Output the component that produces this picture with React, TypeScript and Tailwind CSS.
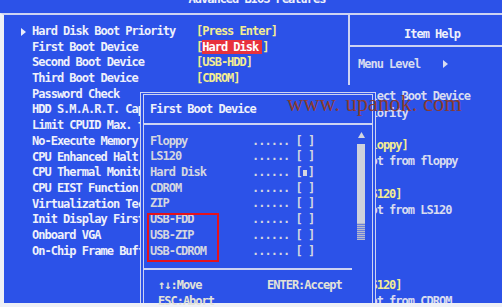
const MENU = [
  { label: "Hard Disk Boot Priority", value: "[Press Enter]", arrow: true },
  { label: "First Boot Device", value: "hd" },
  { label: "Second Boot Device", value: "[USB-HDD]" },
  { label: "Third Boot Device", value: "[CDROM]" },
  { label: "Password Check", value: "" },
  { label: "HDD S.M.A.R.T. Capability", value: "" },
  { label: "Limit CPUID Max. to 3", value: "" },
  { label: "No-Execute Memory Protect", value: "" },
  { label: "CPU Enhanced Halt (C1E)", value: "" },
  { label: "CPU Thermal Monitor 2(TM2)", value: "" },
  { label: "CPU EIST Function", value: "" },
  { label: "Virtualization Technology", value: "" },
  { label: "Init Display First", value: "" },
  { label: "Onboard VGA", value: "" },
  { label: "On-Chip Frame Buffer Size", value: "" },
];

const DEVICES = ["Floppy", "LS120", "Hard Disk", "CDROM", "ZIP", "USB-FDD", "USB-ZIP", "USB-CDROM"];

// help lines that sit behind the popup: only the part right of it shows
const HELP = [
  { text: "Select Boot Device", yellow: false },
  { text: "Priority", yellow: false },
  { text: "", yellow: false },
  { text: "[Floppy]", yellow: true },
  { text: "Boot from floppy", yellow: false },
  { text: "", yellow: false },
  { text: "[LS120]", yellow: true },
  { text: "Boot from LS120", yellow: false },
];

function Arrow({ color = "#e8ecfa" }: { color?: string }) {
  return (
    <svg width="5" height="8" viewBox="0 0 5 8">
      <polygon points="0,0 5,4 0,8" fill={color} />
    </svg>
  );
}

function HelpLine({ text, yellow, className = "" }: { text: string; yellow?: boolean; className?: string }) {
  return (
    <div className={`ml-[18px] h-[16.2px] overflow-hidden whitespace-nowrap leading-[16.2px] ${className}`}>
      <div className={`-ml-[18px] ${yellow ? "text-[#f3ec92]" : ""}`}>{text}</div>
    </div>
  );
}

export default function App() {
  return (
    <div className="relative flex h-[307px] w-[502px] flex-col overflow-hidden bg-[#2c52e8] font-['DejaVu_Sans_Mono','Liberation_Mono',monospace] text-[12px] font-bold tracking-[-1px]">
      {/* title, mostly cut off by the photo */}
      <div className="h-[13px] shrink-0 overflow-hidden">
        <div className="-mt-[8px] h-[15.7px] pl-[12px] text-center leading-[15.7px] text-[#eef0fb]">
          Advanced BIOS Features
        </div>
      </div>

      <div className="flex min-h-0 flex-1 border-l-4 border-t-2 border-l-[#eef0f6] border-t-[#cdd3f2]">
        {/* left: settings */}
        <div className="flex w-[346px] shrink-0 flex-col border-r-2 border-[#cdd3f2] pl-[17px] pt-[9px]">
          {MENU.map((m, i) => (
            <div key={m.label} className="flex h-[15.7px] items-center whitespace-nowrap leading-[15.7px]">
              <span className="flex w-[11px] shrink-0 items-center">{m.arrow && <Arrow />}</span>
              <span className={`shrink-0 text-[#eef0fb] ${i >= 5 ? "w-[108px] overflow-hidden" : "w-[164px]"}`}>
                {m.label}
              </span>
              {m.value === "hd" ? (
                <span className="text-[#f3ec92]">
                  [<span className="bg-[#e8323c] pr-[4px] text-white">Hard Disk</span>]
                </span>
              ) : (
                <span className="text-[#f3ec92]">{m.value}</span>
              )}
            </div>
          ))}
        </div>

        {/* right: item help */}
        <div className="flex flex-1 flex-col">
          <div className="flex h-[32px] shrink-0 items-center justify-center border-b-2 border-[#cdd3f2] pl-[12px] pt-[8px] text-[#eef0fb]">
            Item Help
          </div>
          <div className="flex flex-col pl-[8px] pt-[9px] text-[#d8dcf0]">
            <div className="flex h-[16.2px] items-center whitespace-nowrap leading-[16.2px]">
              <span className="w-[85px]">Menu Level</span>
              <Arrow color="#d8dcf0" />
            </div>
            <div className="h-[16.2px]" />
            {HELP.map((h, i) => (
              <HelpLine key={i} text={h.text} yellow={h.yellow} />
            ))}
            <HelpLine text="[LS120]" yellow className="mt-[59px]" />
            <HelpLine text="Boot from CDROM" />
          </div>
        </div>
      </div>

      <div className="h-[4px] shrink-0 bg-[#eef0f6]" />

      {/* popup: boot device list */}
      <div className="absolute left-[140px] top-[85px] w-[236px] bg-[#2c52e8] pt-[7px]">
        <div className="flex h-[211px] flex-col border-x-4 border-t-[3px] border-double border-[#cdd3f2]">
          <div className="box-content h-[15.7px] pl-[6px] pt-[7px] leading-[15.7px] text-[#eef0fb]">First Boot Device</div>
          <div className="mt-[5px] h-[2px] shrink-0 bg-[#cdd3f2]" />
          <div className="flex pt-[9px]">
            <div className="flex flex-col pl-[6px] text-[#d4d6e0]">
              {DEVICES.map((d) => (
                <div key={d} className="flex h-[15.7px] items-center whitespace-pre leading-[15.7px]">
                  <span className="w-[102px] shrink-0">{d}</span>
                  <span>{"...... ["}</span>
                  {d === "Hard Disk" ? (
                    <span className="mx-[1px] inline-block h-[6px] w-[4px] bg-[#d4d6e0]" />
                  ) : (
                    <span> </span>
                  )}
                  <span>]</span>
                </div>
              ))}
            </div>
            <div className="ml-auto mr-[7px] flex w-[8px] flex-col items-center">
              <svg className="mt-[-2px]" width="7" height="6" viewBox="0 0 7 6">
                <polygon points="3.5,0 7,6 0,6" fill="#d4d6e0" />
              </svg>
              <div className="mt-[6px] h-[79px] w-[8px] bg-[#cfd2dc]" />
              <div className="h-[17px] w-[8px] bg-[repeating-linear-gradient(0deg,#b8bccc_0px,#b8bccc_1px,#6a80dc_1px,#6a80dc_2px)]" />
            </div>
          </div>
          <div className="mr-[20px] mt-[9px] h-[2px] shrink-0 bg-[#cdd3f2]" />
          <div className="flex flex-col pl-[14px] pt-[8px] text-[#e2e2d8]">
            <div className="flex h-[15.7px] items-center whitespace-nowrap leading-[15.7px]">
              <span className="w-[109px]">↑↓:Move</span>
              <span>ENTER:Accept</span>
            </div>
            <div className="h-[15.7px] whitespace-nowrap leading-[15.7px]">ESC:Abort</div>
          </div>
        </div>
      </div>

      {/* photo watermark */}
      <div className="absolute left-[287px] top-[93px] whitespace-pre font-['Liberation_Serif',serif] text-[22.5px] font-normal leading-none tracking-normal text-[#8a3b30]">
        www. upanok. com
      </div>

      {/* red highlight box */}
      <div className="absolute left-[147px] top-[213px] h-[49px] w-[72px] border-2 border-[#e3121c]" />
    </div>
  );
}
